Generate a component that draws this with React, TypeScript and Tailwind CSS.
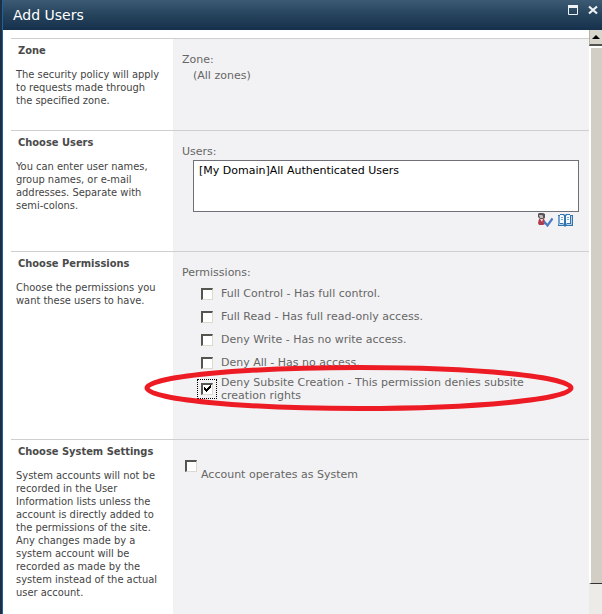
/**
 * @fileoverview "Add Users" dialog for the web application policy page.
 * Title bar, four form sections (description left, controls right) and the dialog scrollbar.
 */
import { useState } from 'react';
import type { ReactNode } from 'react';

// --- Data --- //
const permissionItems = [
  { id: 'full-control', label: 'Full Control - Has full control.' },
  { id: 'full-read', label: 'Full Read - Has full read-only access.' },
  { id: 'deny-write', label: 'Deny Write - Has no write access.' },
  { id: 'deny-all', label: 'Deny All - Has no access.' },
];

// --- Checkbox with the classic sunken look --- //
interface CheckboxProps {
  id: string;
  checked: boolean;
  onChange: () => void;
}

function Checkbox({ id, checked, onChange }: CheckboxProps) {
  return (
    <span className="grid h-3 w-3 shrink-0">
      <input
        id={id}
        type="checkbox"
        checked={checked}
        onChange={onChange}
        className="col-start-1 row-start-1 h-3 w-3 appearance-none border-t-2 border-l-2 border-r border-b border-t-[#55554f] border-l-[#55554f] border-r-[#dcd9d2] border-b-[#dcd9d2] bg-white outline-none"
      />
      {checked && (
        <svg viewBox="0 0 12 12" className="pointer-events-none col-start-1 row-start-1 h-3 w-3" shapeRendering="crispEdges" aria-hidden="true">
          <path d="M3 4h1v1h1v1h1V5h1V4h1V3h1V2h1v3H9v1H8v1H7v1H6v1H5V8H4V7H3z" fill="#000" />
        </svg>
      )}
    </span>
  );
}

// --- Form Section --- //
interface SectionProps {
  title: string;
  description: string;
  className: string;
  children: ReactNode;
}

function Section({ title, description, className, children }: SectionProps) {
  return (
    <section className={`flex border-t border-[#cfcfd2] ${className}`}>
      <div className="w-[162px] shrink-0 bg-white pt-[5px] pr-3 pb-3 pl-[5px] font-['DejaVu_Sans_Condensed','DejaVu_Sans',sans-serif] text-[11px] leading-[13px] text-[#444]">
        <h2 className="pl-0.5 font-bold text-[#4a4a4a]">{title}</h2>
        <p className="mt-[11px]">{description}</p>
      </div>
      <div className="min-w-0 flex-1 bg-[#f2f2f4] pt-[13px] pr-2.5 pl-[9px]">{children}</div>
    </section>
  );
}

export default function App() {
  const [users, setUsers] = useState('[My Domain]All Authenticated Users');
  const [selected, setSelected] = useState<string[]>(['deny-subsite']);
  const [isSystem, setIsSystem] = useState(false);

  const toggle = (id: string) => {
    setSelected((prev) => (prev.includes(id) ? prev.filter((p) => p !== id) : [...prev, id]));
  };

  return (
    <div className="flex h-screen overflow-hidden bg-white font-['DejaVu_Sans',sans-serif] text-[11px] leading-4 text-[#666]">
      {/* Window edge */}
      <div className="w-[3px] shrink-0 border-r border-[#1b64a0] bg-[#1d2f45]" />

      <div className="flex min-w-0 flex-1 flex-col">
        {/* Title bar */}
        <header className="flex h-[30px] shrink-0 items-center justify-between bg-linear-to-b from-[#3d5a74] via-[#26435c] to-[#15304b] pr-[3px] pl-2.5">
          <h1 className="text-sm text-white">Add Users</h1>
          <div className="flex gap-2 pb-2.5">
            <button type="button" aria-label="Maximize">
              <svg viewBox="0 0 12 12" className="h-3 w-3" aria-hidden="true">
                <path d="M1.5 2.5h9v8h-9z" fill="none" stroke="#eef2f5" />
                <path d="M1 1h10v3H1z" fill="#eef2f5" />
              </svg>
            </button>
            <button type="button" aria-label="Close">
              <svg viewBox="0 0 12 12" className="h-3 w-3" aria-hidden="true">
                <path d="M2 2.5l8 7M10 2.5l-8 7" stroke="#eef2f5" strokeWidth="2.2" />
              </svg>
            </button>
          </div>
        </header>

        <div className="flex min-h-0 flex-1">
          <main className="flex min-w-0 flex-1 flex-col pt-2 pl-2">
            <Section
              title="Zone"
              description="The security policy will apply to requests made through the specified zone."
              className="min-h-[92px]"
            >
              <p>Zone:</p>
              <p className="pl-[11px]">(All zones)</p>
            </Section>

            <Section
              title="Choose Users"
              description="You can enter user names, group names, or e-mail addresses. Separate with semi-colons."
              className="min-h-[121px]"
            >
              <label htmlFor="users" className="block">Users:</label>
              <div className="pl-[11px]">
                <textarea
                  id="users"
                  value={users}
                  onChange={(e) => setUsers(e.target.value)}
                  className="block h-[52px] w-full resize-none border border-[#6f7078] bg-white px-[5px] py-0.5 text-black outline-none"
                />
                <div className="flex justify-end gap-1 pr-1.5">
                  <button type="button" aria-label="Check Names">
                    <svg viewBox="0 0 16 16" className="h-4 w-4" aria-hidden="true">
                      <path d="M2 1h4l2 1v4L6 7H3L1 5V2z" fill="#57535a" />
                      <path d="M2 3h3l1 1v2H3z" fill="#c9b8b4" />
                      <path d="M2 7h5l1 2v3l-2 1H2l-1-2z" fill="#b23a48" />
                      <path d="M3 7l2 3 1-3z" fill="#f3dcdc" />
                      <path d="M7 9.5l3.500 4L15.500 6.500" fill="none" stroke="#4a7cc4" strokeWidth="2.2" />
                    </svg>
                  </button>
                  <button type="button" aria-label="Browse">
                    <svg viewBox="0 0 16 16" className="h-4 w-4" aria-hidden="true">
                      <path d="M1 3h2V2h4l1 1 1-1h4v1h3v11H9l-1 1-1-1H1z" fill="#3474ad" />
                      <path d="M3 3h3l1 1v8l-1-1H3zM10 3h3v8h-3l-1 1V4z" fill="#f4faff" />
                      <path d="M4 5.5h2M4 7.5h2M10 5.5h2M10 7.5h2" stroke="#79a9d2" />
                      <path d="M2 4v8.5h4.5M14.5 4v8.5H9.5" fill="none" stroke="#b5d3ec" />
                    </svg>
                  </button>
                </div>
              </div>
            </Section>

            <Section
              title="Choose Permissions"
              description="Choose the permissions you want these users to have."
              className="min-h-[188px]"
            >
              <fieldset>
                <legend>Permissions:</legend>
                <ul className="pl-[19px]">
                  {permissionItems.map((item) => (
                    <li key={item.id} className="flex h-[23px] items-center gap-2 pt-0.5">
                      <Checkbox id={item.id} checked={selected.includes(item.id)} onChange={() => toggle(item.id)} />
                      <label htmlFor={item.id}>{item.label}</label>
                    </li>
                  ))}
                  <li className="relative flex items-center gap-2 pt-[3px] leading-[13px]">
                    <span className="-m-1 border border-dotted border-black p-[3px]">
                      <Checkbox
                        id="deny-subsite"
                        checked={selected.includes('deny-subsite')}
                        onChange={() => toggle('deny-subsite')}
                      />
                    </span>
                    <label htmlFor="deny-subsite" className="max-w-[330px]">
                      Deny Subsite Creation - This permission denies subsite creation rights
                    </label>
                    {/* Hand-drawn highlight around the subsite permission */}
                    <svg
                      viewBox="0 0 432 48"
                      className="pointer-events-none absolute -top-2 -left-[58px] h-12 w-[432px]"
                      aria-hidden="true"
                    >
                      <ellipse cx="216" cy="23" rx="212" ry="20.5" fill="none" stroke="#ed1c24" strokeWidth="5" />
                    </svg>
                  </li>
                </ul>
              </fieldset>
            </Section>

            <Section
              title="Choose System Settings"
              description="System accounts will not be recorded in the User Information lists unless the account is directly added to the permissions of the site. Any changes made by a system account will be recorded as made by the system instead of the actual user account."
              className="flex-1"
            >
              <div className="flex items-start gap-1 pt-[7px] pl-[3px]">
                <Checkbox id="system-account" checked={isSystem} onChange={() => setIsSystem(!isSystem)} />
                <label htmlFor="system-account" className="pt-[7px]">Account operates as System</label>
              </div>
            </Section>
          </main>

          {/* Scrollbar */}
          <div className="flex w-[13px] shrink-0 flex-col bg-[#ecebe7]">
            <button
              type="button"
              aria-label="Scroll up"
              className="flex h-4 w-full items-center justify-center border-b-2 border-l border-b-[#55534f] border-l-[#b5b2aa] bg-[#d8d5cd]"
            >
              <svg viewBox="0 0 8 4" className="h-1 w-2" aria-hidden="true">
                <path d="M4 0l4 4H0z" fill="#000" />
              </svg>
            </button>
            <div className="mb-[30px] flex-1 border-t-2 border-b border-l-2 border-t-white border-b-[#333] border-l-white bg-[#d2cec6]" />
          </div>
        </div>
      </div>
    </div>
  );
}
